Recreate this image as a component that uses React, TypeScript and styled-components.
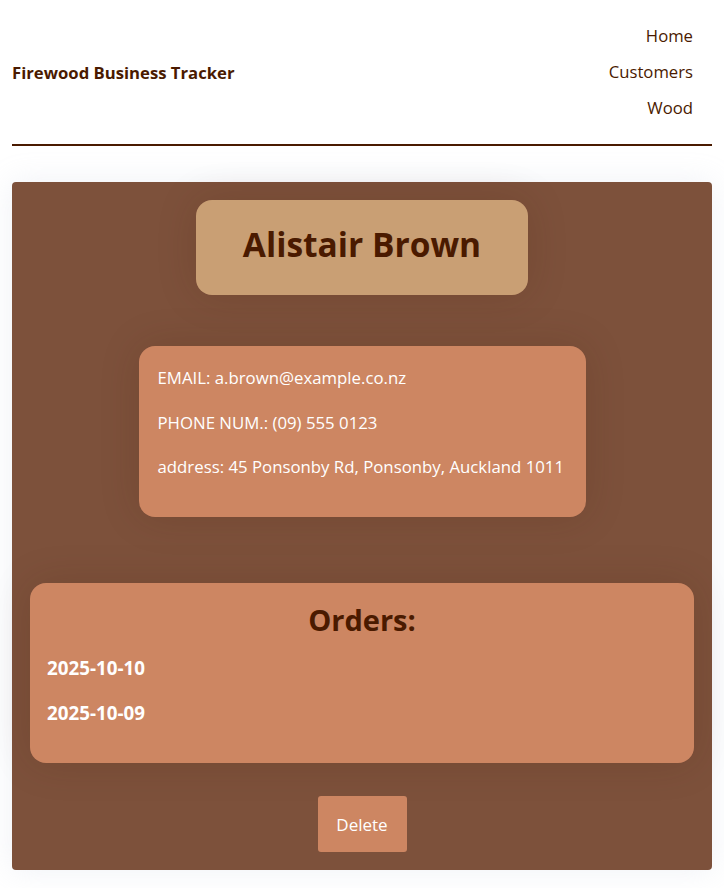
import styled, { createGlobalStyle } from "styled-components";

const GlobalStyle = createGlobalStyle`
  body {
    margin: 0;
    background: #ffffff;
    font-family: "Open Sans", "Noto Sans", sans-serif;
  }
`;

const Page = styled.div`
  padding: 0 12px 18px;
`;

const Header = styled.header`
  display: flex;
  justify-content: space-between;
  align-items: center;
  height: 144px;
  border-bottom: 2px solid #4a1a00;
`;

const Brand = styled.div`
  font-weight: 700;
  font-size: 16.7px;
  color: #4a1a00;
`;

const Nav = styled.nav`
  display: flex;
  flex-direction: column;
  align-items: flex-end;
  gap: 14px;
  padding-right: 19px;
`;

const NavLink = styled.a`
  font-size: 16.7px;
  line-height: 22px;
  color: #4a1a00;
  text-decoration: none;
`;

const Card = styled.main`
  margin-top: 36px;
  background: #7d513b;
  border-radius: 4px;
  padding: 18px;
  display: flex;
  flex-direction: column;
  align-items: center;
  box-shadow: 0 0 30px rgba(180, 190, 215, 0.22);
`;

const NameBox = styled.div`
  width: 332px;
  height: 95px;
  display: flex;
  align-items: center;
  justify-content: center;
  background: #c99f74;
  border-radius: 16px;
  box-shadow: 0 0 40px rgba(70, 30, 10, 0.16);
`;

const Name = styled.h1`
  margin: 0 0 8px;
  font-size: 33.5px;
  font-weight: 700;
  color: #4a1a00;
`;

const InfoBox = styled.section`
  margin-top: 51px;
  width: 447px;
  box-sizing: border-box;
  padding: 17px 19px 35px;
  background: #cd8662;
  border-radius: 16px;
  box-shadow: 0 0 40px rgba(70, 30, 10, 0.16);
`;

const InfoLine = styled.p`
  margin: 0;
  font-size: 16.8px;
  line-height: 30px;
  color: #ffffff;
  white-space: nowrap;

  & + & {
    margin-top: 14.5px;
  }
`;

const OrdersBox = styled.section`
  margin-top: 66px;
  align-self: stretch;
  height: 180px;
  box-sizing: border-box;
  padding: 16px 17px;
  background: #cd8662;
  border-radius: 16px;
  box-shadow: 0 0 40px rgba(70, 30, 10, 0.16);
`;

const OrdersTitle = styled.h2`
  margin: 0 0 15px;
  text-align: center;
  font-size: 29px;
  line-height: 42px;
  font-weight: 700;
  color: #4a1a00;
`;

const OrderDate = styled.div`
  font-size: 18.8px;
  line-height: 24px;
  font-weight: 700;
  color: #ffffff;

  & + & {
    margin-top: 21px;
  }
`;

const DeleteButton = styled.button`
  margin-top: 33px;
  width: 89px;
  height: 56px;
  border: none;
  border-radius: 3px;
  background: #cd8662;
  color: #ffffff;
  font-family: inherit;
  font-size: 17px;
  cursor: pointer;
`;

const orders = ["2025-10-10", "2025-10-09"];

export default function App() {
  return (
    <>
      <GlobalStyle />
      <Page>
        <Header>
          <Brand>Firewood Business Tracker</Brand>
          <Nav>
            <NavLink href="#">Home</NavLink>
            <NavLink href="#">Customers</NavLink>
            <NavLink href="#">Wood</NavLink>
          </Nav>
        </Header>
        <Card>
          <NameBox>
            <Name>Alistair Brown</Name>
          </NameBox>
          <InfoBox>
            <InfoLine>EMAIL: a.brown@example.co.nz</InfoLine>
            <InfoLine>PHONE NUM.: (09) 555 0123</InfoLine>
            <InfoLine>address: 45 Ponsonby Rd, Ponsonby, Auckland 1011</InfoLine>
          </InfoBox>
          <OrdersBox>
            <OrdersTitle>Orders:</OrdersTitle>
            {orders.map((d) => (
              <OrderDate key={d}>{d}</OrderDate>
            ))}
          </OrdersBox>
          <DeleteButton>Delete</DeleteButton>
        </Card>
      </Page>
    </>
  );
}
